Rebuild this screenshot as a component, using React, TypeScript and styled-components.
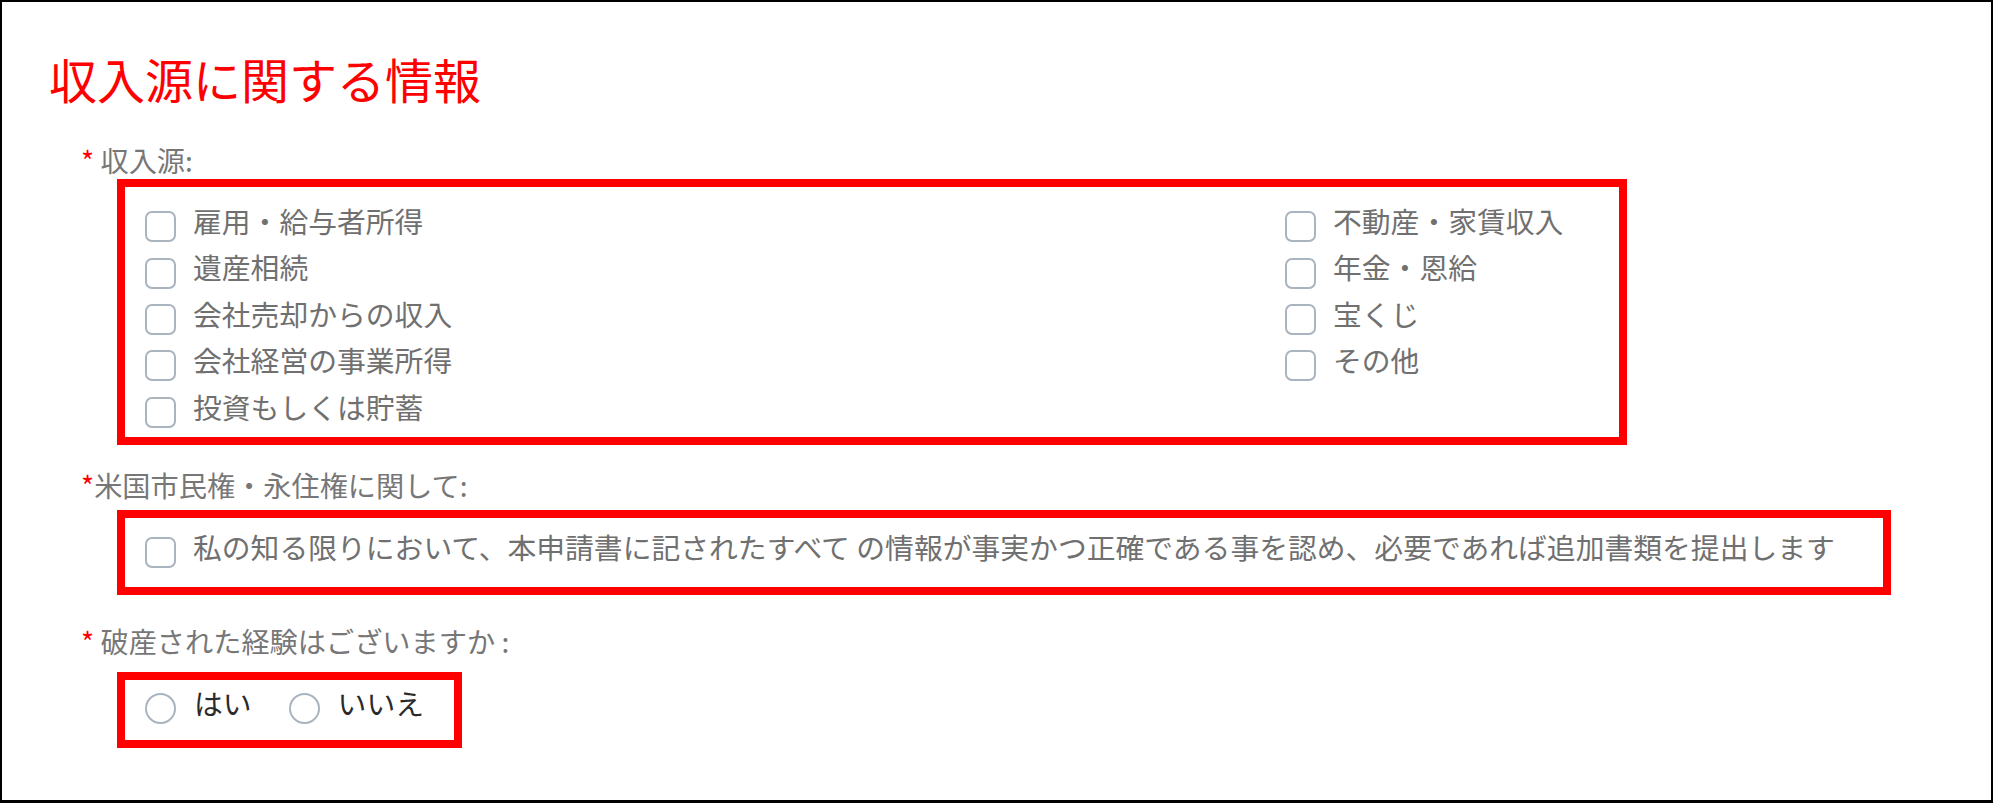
import React from "react";
import styled, { createGlobalStyle } from "styled-components";

const GlobalStyle = createGlobalStyle`
  html, body {
    margin: 0;
    padding: 0;
    background: #fff;
  }
  body {
    font-family: "Noto Sans CJK JP", "Noto Sans", sans-serif;
  }
  * {
    box-sizing: border-box;
  }
`;

// black frame round the whole capture
const Frame = styled.div`
  width: 100vw;
  height: 100vh;
  border: 2px solid #000;
  border-bottom-width: 3px;
  padding: 46px 0 0 47px;
  overflow: hidden;
`;

const Title = styled.h2`
  margin: 0;
  font-size: 48px;
  line-height: 60px;
  font-weight: 400;
  color: #ff0000;
  white-space: nowrap;
`;

const Label = styled.div<{ $top: number }>`
  margin: ${(p) => p.$top}px 0 0 32px;
  font-size: 28.2px;
  line-height: 36px;
  color: #777;
  white-space: nowrap;
`;

const Req = styled.span`
  color: #ff0000;
`;

// red annotation box around each answer area
const Outline = styled.div<{ $top: number; $width: number; $pad: string }>`
  margin: ${(p) => p.$top}px 0 0 68px;
  width: ${(p) => p.$width}px;
  border: 8px solid #ff0000;
  padding: ${(p) => p.$pad};
`;

const Columns = styled.div`
  display: grid;
  grid-template-columns: 1140px 1fr;
`;

const Column = styled.div`
  display: flex;
  flex-direction: column;
`;

const Option = styled.label<{ $dark?: boolean }>`
  display: flex;
  align-items: center;
  height: 46.4px;
  font-size: 28.8px;
  line-height: 46.4px;
  color: ${(p) => (p.$dark ? "#2a2a2a" : "#707070")};
  white-space: nowrap;
`;

const Check = styled.span<{ $round?: boolean }>`
  flex: none;
  width: 31px;
  height: 31px;
  margin: ${(p) => (p.$round ? "9px 18px 0 0" : "11px 17px 0 0")};
  border: 2px solid #a9b4bf;
  border-radius: ${(p) => (p.$round ? "50%" : "7px")};
  background: #fff;
`;

const RadioRow = styled.div`
  display: flex;
  gap: 37px;
`;

const leftSources = [
  "雇用・給与者所得",
  "遺産相続",
  "会社売却からの収入",
  "会社経営の事業所得",
  "投資もしくは貯蓄",
];

const rightSources = ["不動産・家賃収入", "年金・恩給", "宝くじ", "その他"];

const App: React.FC = () => (
  <>
    <GlobalStyle />
    <Frame>
      <Title>収入源に関する情報</Title>

      <Label $top={34}>
        <Req>*</Req> 収入源:
      </Label>
      <Outline $top={1} $width={1510} $pad="11px 0 7px 20px">
        <Columns>
          <Column>
            {leftSources.map((s) => (
              <Option key={s}>
                <Check />
                {s}
              </Option>
            ))}
          </Column>
          <Column>
            {rightSources.map((s) => (
              <Option key={s}>
                <Check />
                {s}
              </Option>
            ))}
          </Column>
        </Columns>
      </Outline>

      <Label $top={22}>
        <Req>*</Req>米国市民権・永住権に関して:
      </Label>
      <Outline $top={7} $width={1774} $pad="6px 0 17px 20px">
        <Option>
          <Check />
          私の知る限りにおいて、本申請書に記されたすべて の情報が事実かつ正確である事を認め、必要であれば追加書類を提出します
        </Option>
      </Outline>

      <Label $top={28}>
        <Req>*</Req> 破産された経験はございますか :
      </Label>
      <Outline $top={13} $width={345} $pad="0 0 13px 20px">
        <RadioRow>
          <Option $dark>
            <Check $round />
            はい
          </Option>
          <Option $dark>
            <Check $round />
            いいえ
          </Option>
        </RadioRow>
      </Outline>
    </Frame>
  </>
);

export default App;
